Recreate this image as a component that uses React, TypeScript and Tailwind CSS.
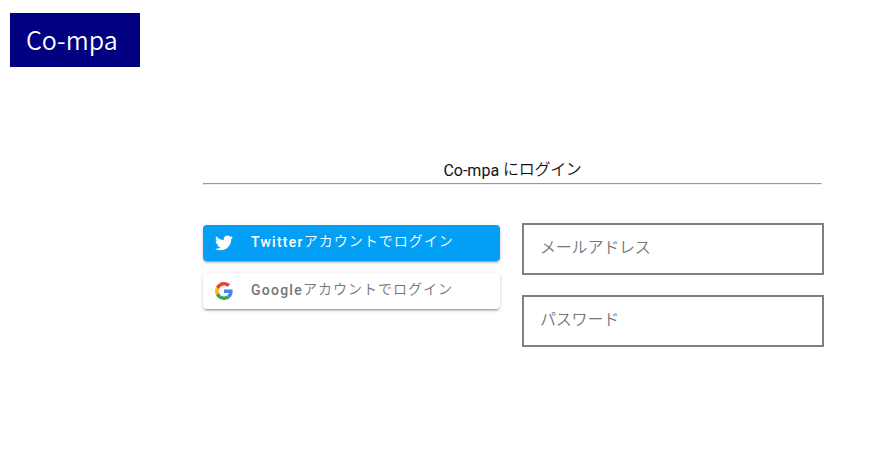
import React from "react";

function TwitterIcon() {
  return (
    <svg viewBox="0 0 24 24" className="h-[18px] w-[18px] shrink-0" fill="#fff">
      <path d="M23.954 4.569a10 10 0 0 1-2.825.775 4.958 4.958 0 0 0 2.163-2.723c-.951.555-2.005.959-3.127 1.184a4.92 4.92 0 0 0-8.384 4.482C7.691 8.094 4.066 6.13 1.64 3.161a4.822 4.822 0 0 0-.666 2.475c0 1.71.87 3.213 2.188 4.096a4.904 4.904 0 0 1-2.228-.616v.061a4.923 4.923 0 0 0 3.946 4.827 4.996 4.996 0 0 1-2.212.085 4.937 4.937 0 0 0 4.604 3.417 9.868 9.868 0 0 1-6.102 2.105c-.39 0-.779-.023-1.17-.067a13.995 13.995 0 0 0 7.557 2.209c9.054 0 13.999-7.496 13.999-13.986 0-.209 0-.42-.015-.63a9.936 9.936 0 0 0 2.46-2.548z" />
    </svg>
  );
}

function GoogleIcon() {
  return (
    <svg viewBox="0 0 48 48" className="h-[18px] w-[18px] shrink-0">
      <path fill="#EA4335" d="M24 9.5c3.54 0 6.71 1.22 9.21 3.6l6.85-6.85C35.9 2.38 30.47 0 24 0 14.62 0 6.51 5.38 2.56 13.22l7.98 6.19C12.43 13.72 17.74 9.5 24 9.5z" />
      <path fill="#4285F4" d="M46.98 24.55c0-1.57-.15-3.09-.38-4.55H24v9.02h12.94c-.58 2.96-2.26 5.48-4.78 7.18l7.73 6c4.51-4.18 7.09-10.36 7.09-17.65z" />
      <path fill="#FBBC05" d="M10.53 28.59c-.48-1.45-.76-2.99-.76-4.59s.27-3.14.76-4.59l-7.98-6.19C.92 16.46 0 20.12 0 24c0 3.88.92 7.54 2.56 10.78l7.97-6.19z" />
      <path fill="#34A853" d="M24 48c6.48 0 11.93-2.13 15.89-5.81l-7.73-6c-2.15 1.45-4.92 2.3-8.16 2.3-6.26 0-11.57-4.22-13.47-9.91l-7.98 6.19C6.51 42.62 14.62 48 24 48z" />
    </svg>
  );
}

const buttonBase =
  "flex h-9 w-full items-center whitespace-nowrap rounded pl-3 text-left text-sm font-medium tracking-[1.25px] shadow-[0_3px_1px_-2px_rgba(0,0,0,0.2),0_2px_2px_0_rgba(0,0,0,0.14),0_1px_5px_0_rgba(0,0,0,0.12)]";

const fieldBase =
  "block h-[52px] w-full border-2 border-[#808080] bg-white px-4 pb-[6px] font-['Noto_Sans_CJK_JP',sans-serif] text-base font-[350] tracking-[-0.2px] text-black outline-none placeholder:text-[#757575]";

function ButtonLabel({ provider }: { provider: string }) {
  return (
    <span className="ml-[18px] pb-[2px]">
      {provider}
      <span className="align-[1px] font-['Noto_Sans_CJK_JP',sans-serif] font-[350] leading-none tracking-[1.02px]">
        アカウントでログイン
      </span>
    </span>
  );
}

export default function App() {
  return (
    <div className="min-h-screen bg-white pl-[10px] pt-[13px] font-[Roboto,'Noto_Sans_CJK_JP',sans-serif] text-black">
      <header className="flex h-[54px] w-[130px] items-center bg-[#000080] pl-4 font-['Noto_Sans_CJK_JP',sans-serif] text-[25px] font-[350] text-white">
        Co-mpa
      </header>
      <main className="ml-[193px] mt-[92px] w-[621px]">
        <h1 className="mr-[2px] h-[24px] text-center text-base leading-[24px] text-[#111]">
          Co-mpa{" "}
          <span className="align-[1px] font-['Noto_Sans_CJK_JP',sans-serif] font-[350] leading-none tracking-[-0.3px]">にログイン</span>
        </h1>
        <hr className="mr-[2px] h-0 border border-b-[#eee] border-l-[#999] border-r-[#eee] border-t-[#999]" />
        <div className="mt-[38px] flex gap-[22px]">
          <div className="flex w-[297px] flex-col gap-3 pt-[2px]">
            <button className={buttonBase + " bg-[#039ff5] text-white"}>
              <TwitterIcon />
              <ButtonLabel provider="Twitter" />
            </button>
            <button className={buttonBase + " bg-white text-[#757575]"}>
              <GoogleIcon />
              <ButtonLabel provider="Google" />
            </button>
          </div>
          <form className="flex w-[302px] flex-col gap-5">
            <input className={fieldBase} type="email" placeholder="メールアドレス" />
            <input className={fieldBase} type="password" placeholder="パスワード" />
          </form>
        </div>
      </main>
    </div>
  );
}
